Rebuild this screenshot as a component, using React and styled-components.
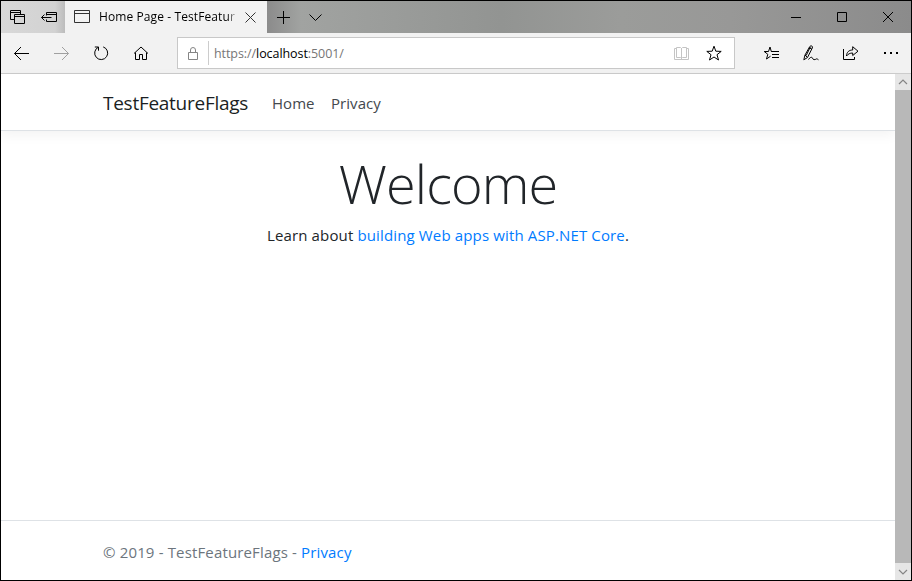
import React from "react";
import styled, { createGlobalStyle } from "styled-components";

const GlobalStyle = createGlobalStyle`
  * { box-sizing: border-box; }
  body { margin: 0; background: #fff; font-family: "Open Sans", "Noto Sans", sans-serif; }
  a { color: #007bff; text-decoration: none; }
`;

const Window = styled.div`
  display: flex;
  flex-direction: column;
  width: 912px;
  height: 581px;
  border: 1px solid #000;
  background: #fff;
  overflow: hidden;
`;

const TitleBar = styled.div`
  display: flex;
  flex: none;
  height: 32px;
  background: linear-gradient(90deg, #8b8b8b 266px, #a1a3a1 300px, #9b9d9b 380px, #929492 500px, #9b9c9a 620px, #989897 730px, #8b8b8b 911px);
`;

const TabActions = styled.div`
  display: flex;
  align-items: center;
  width: 64px;
  background: linear-gradient(90deg, #d8d8d8, #d2d2d2 54px, #bcbcbc);
`;

const TabAction = styled.button`
  display: flex;
  align-items: center;
  justify-content: center;
  width: 32px;
  height: 32px;
  padding: 0;
  border: 0;
  background: none;
  color: #000;
`;

const Tab = styled.div`
  display: flex;
  align-items: center;
  width: 202px;
  padding: 0 9px;
  background: #f2f2f2;
  color: #333;
`;

const TabTitle = styled.div`
  width: 137px;
  height: 18px;
  margin: 0 9px 0 9px;
  white-space: nowrap;
  font-size: 12px;
  line-height: 18px;
  letter-spacing: 0.1px;
  color: #000;
  mask-image: linear-gradient(90deg, #000 128px, transparent 139px);
`;

const WindowButtons = styled.div`
  display: flex;
  margin-left: auto;
`;

const WindowButton = styled(TabAction)`
  width: 46px;
`;

const Toolbar = styled.div`
  display: flex;
  flex: none;
  align-items: center;
  height: 41px;
  background: #f2f2f2;
  border-bottom: 1px solid #ccc;
`;

const ToolButton = styled(TabAction)`
  width: 40px;
  height: 40px;
  color: ${(p) => (p.$muted ? "#a0a0a0" : "#000")};
`;

const AddressBar = styled.div`
  display: flex;
  align-items: center;
  width: 558px;
  height: 32px;
  margin: 0 16px;
  padding: 0 12px 0 7px;
  border: 1px solid #c8c8c8;
  background: #fff;
`;

const AddressDivider = styled.div`
  width: 1px;
  height: 24px;
  margin: 0 5px 0 7px;
  background: #ccc;
`;

const Url = styled.div`
  flex: 1;
  padding-top: 2px;
  font-size: 12.5px;
  line-height: 20px;
  letter-spacing: -0.07px;
  color: #767676;
  b { font-weight: 400; color: #000; }
`;

const StarSlot = styled.div`
  display: flex;
  margin-left: 17px;
`;

const SoftIcon = styled.span`
  display: flex;
  color: ${(p) => p.$color};
`;

const Viewport = styled.div`
  display: flex;
  flex: 1;
  min-height: 0;
`;

const Page = styled.div`
  display: flex;
  flex-direction: column;
  flex: 1;
`;

const Header = styled.header`
  display: flex;
  align-items: center;
  height: 57px;
  padding: 2px 102px 0;
  border-bottom: 1px solid #dee2e6;
  box-shadow: 0 4px 12px rgba(0, 0, 0, 0.05);
`;

const Brand = styled.div`
  width: 169px;
  font-size: 19px;
  letter-spacing: -0.27px;
  color: #1b1f23;
`;

const NavLink = styled.div`
  width: 59px;
  font-size: 15px;
  letter-spacing: 0.05px;
  color: #43484d;
`;

const Main = styled.main`
  flex: 1;
  padding-top: 19px;
  text-align: center;
  color: #212529;
`;

const Heading = styled.h1`
  margin: 0;
  font-size: 54px;
  font-weight: 300;
  line-height: 67px;
  letter-spacing: -0.9px;
`;

const Lead = styled.p`
  margin: 6px 0 0;
  font-size: 15px;
  line-height: 24px;
  letter-spacing: 0.14px;
`;

const Footer = styled.footer`
  height: 60px;
  padding: 1px 102px 0;
  border-top: 1px solid #dee2e6;
  font-size: 15px;
  line-height: 60px;
  letter-spacing: 0.15px;
  color: #6c757d;
`;

const ScrollBar = styled.div`
  display: flex;
  flex-direction: column;
  width: 16px;
  background: #e6e6e6;
`;

const ScrollArrow = styled.div`
  display: flex;
  align-items: center;
  justify-content: center;
  height: ${(p) => p.$height}px;
  color: #858585;
`;

const ScrollThumb = styled.div`
  flex: 1;
  background: #b8b8b8;
`;

const Icon = ({ children, w = 16, h = 16, sw = 1 }) => (
  <svg width={w} height={h} viewBox={`0 0 ${w} ${h}`} fill="none" stroke="currentColor" strokeWidth={sw}>
    {children}
  </svg>
);

const LockIcon = () => (
  <SoftIcon $color="#858585">
    <Icon><path d="M3.5 7.5h9v7h-9zM5.500 7.500V5a2.500 2.500 0 0 1 5 0v2.500" /></Icon>
  </SoftIcon>
);

const BookIcon = () => (
  <SoftIcon $color="#c4c4c4">
    <Icon><path d="M3.500 2.500h4l1 1 1-1h4v10h-4l-1 1-1-1h-4zM8.500 3v11M3.500 3.500h-2v11h14v-11h-2" /></Icon>
  </SoftIcon>
);

const star = "M8 1.200 9.800 6.200 15.200 6.400 11 9.700 12.500 15 8 12 3.500 15 5 9.700 .8 6.400 6.200 6.200Z";

export default function App() {
  return (
    <>
      <GlobalStyle />
      <Window>
        <TitleBar>
          <TabActions>
            <TabAction aria-label="Tabs you've set aside">
              <Icon>
                <path d="M5 10.500H1.500v-9h10V5M1.500 3.500h10M5.500 5.500h10v9h-10zM5.500 7.500h10" />
              </Icon>
            </TabAction>
            <TabAction aria-label="Set these tabs aside">
              <Icon>
                <path d="M5.500 6.500V3.500h10v9h-10V10.500M5.500 5.500h10M.5 8.500h10M3.500 5.500l-3 3 3 3" />
              </Icon>
            </TabAction>
          </TabActions>
          <Tab>
            <Icon>
              <path d="M.5 1.500h15v12H.5zM.5 4.500h15" />
            </Icon>
            <TabTitle>Home Page - TestFeatur</TabTitle>
            <Icon w={11} h={11}>
              <path d="M.5.5l10 10M10.500.5l-10 10" />
            </Icon>
          </Tab>
          <TabAction aria-label="New tab">
            <Icon>
              <path d="M8.500 2v13M2 8.500h13" />
            </Icon>
          </TabAction>
          <TabAction aria-label="Tab previews">
            <Icon>
              <path d="M2.500 5.500l6 6 6-6" />
            </Icon>
          </TabAction>
          <WindowButtons>
            <WindowButton aria-label="Minimize">
              <Icon><path d="M3 8.500h10" /></Icon>
            </WindowButton>
            <WindowButton aria-label="Maximize">
              <Icon><path d="M3.500 3.500h9v9h-9z" /></Icon>
            </WindowButton>
            <WindowButton aria-label="Close">
              <Icon><path d="M3 3l10 10M13 3L3 13" /></Icon>
            </WindowButton>
          </WindowButtons>
        </TitleBar>

        <Toolbar>
          <ToolButton aria-label="Back">
            <Icon><path d="M16 8.500H1.500M8 2L1.500 8.500 8 15" /></Icon>
          </ToolButton>
          <ToolButton $muted aria-label="Forward">
            <Icon><path d="M1 8.500h14.500M9 2l6.500 6.500L9 15" /></Icon>
          </ToolButton>
          <ToolButton aria-label="Refresh">
            <Icon><path d="M10.200 1.900A6.500 6.500 0 1 1 5.200 2.300M1.800 2H5.500V5.700" /></Icon>
          </ToolButton>
          <ToolButton aria-label="Home">
            <Icon><path d="M1 8.500l7-6.500 7 6.500M2.500 7.500v7h4v-5h3v5h4v-7" /></Icon>
          </ToolButton>
          <AddressBar>
            <LockIcon />
            <AddressDivider />
            <Url>https://<b>localhost</b>:5001/</Url>
            <BookIcon />
            <StarSlot>
              <Icon><path d={star} /></Icon>
            </StarSlot>
          </AddressBar>
          <ToolButton aria-label="Favorites">
            <Icon>
              <path d="M9.500 6.500H8.300L7 2 5.500 6.500H1.200L4.800 9.300 3.500 14 7.500 11.200M8.500 6.500H16M9 9.500h7M9 12.500h7" />
            </Icon>
          </ToolButton>
          <ToolButton aria-label="Add notes">
            <Icon>
              <path d="M.8 14.800 2 10 6.500 2C7.500 0 10.200.8 9.300 3L4.500 12.500.8 14.800M2 10l2.200 2.200M6.300 2.800l2.500 1.300M7.300 2 3.200 10.500M5.500 14.500C7.500 11.500 9.300 12 9.500 13.300S12 15 12.700 14.300s1.500-.5 2.800.5" />
            </Icon>
          </ToolButton>
          <ToolButton aria-label="Share">
            <Icon>
              <path d="M.5 4v10.500h11V12M3.500 11C3.700 7 6 5 9.700 5V1.700L15 6.200 9.700 10.500V8C7 8 5 9 3.500 11Z" />
            </Icon>
          </ToolButton>
          <ToolButton aria-label="Settings and more">
            <Icon><path d="M1 8h2M7 8h2M13 8h2" strokeWidth="2" /></Icon>
          </ToolButton>
        </Toolbar>

        <Viewport>
          <Page>
            <Header>
              <Brand>TestFeatureFlags</Brand>
              <NavLink>Home</NavLink>
              <NavLink>Privacy</NavLink>
            </Header>
            <Main>
              <Heading>Welcome</Heading>
              <Lead>
                Learn about <a href="#core">building Web apps with ASP.NET Core</a>.
              </Lead>
            </Main>
            <Footer>
              © 2019 - TestFeatureFlags - <a href="#privacy">Privacy</a>
            </Footer>
          </Page>
          <ScrollBar>
            <ScrollArrow $height={16}>
              <Icon w={10} h={6} sw={1.2}><path d="M1 5l4-4 4 4" /></Icon>
            </ScrollArrow>
            <ScrollThumb />
            <ScrollArrow $height={17}>
              <Icon w={10} h={6} sw={1.2}><path d="M1 1l4 4 4-4" /></Icon>
            </ScrollArrow>
          </ScrollBar>
        </Viewport>
      </Window>
    </>
  );
}
